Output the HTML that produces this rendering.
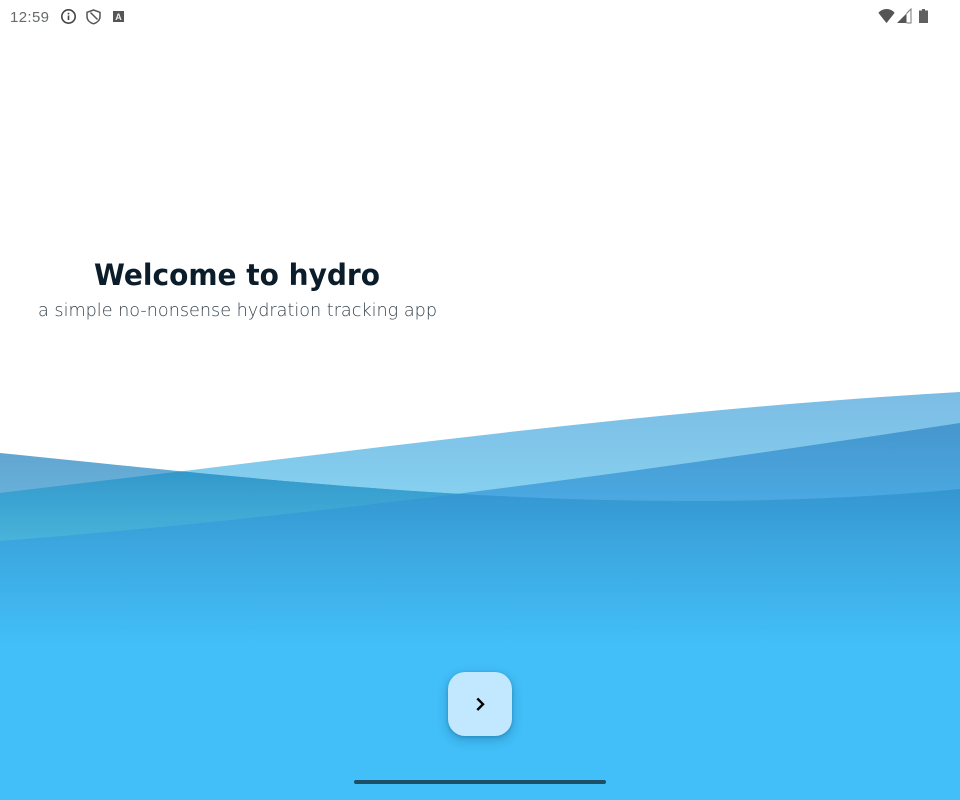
<!DOCTYPE html>
<html lang="en">
<head>
<meta charset="utf-8">
<title>hydro</title>
<style>
html,body{margin:0;padding:0;background:#fff;width:960px;height:800px;overflow:hidden}
svg{position:absolute;left:0;top:0;display:block}
.btn{position:absolute;left:448px;top:672px;width:64px;height:64px;border-radius:17px;background:#c1e8ff;box-shadow:0 4px 10px 2px rgba(0,60,100,.2),0 1px 3px rgba(0,60,100,.28)}
.nav{position:absolute;left:354px;top:780px;width:252px;height:4px;border-radius:2px;background:#1c4f68}
</style>
</head>
<body>
<svg width="960" height="800" viewBox="0 0 960 800">
  <defs>
    <linearGradient id="a" gradientUnits="userSpaceOnUse" x1="0" y1="450" x2="0" y2="645">
      <stop offset="0" stop-color="#2583bd"/><stop offset=".5" stop-color="#36a3dc"/><stop offset="1" stop-color="#3dbdf8"/>
    </linearGradient>
    <linearGradient id="b" gradientUnits="userSpaceOnUse" x1="0" y1="392" x2="0" y2="645">
      <stop offset="0" stop-color="#3d9cd7"/><stop offset=".4" stop-color="#4cb9e8"/><stop offset="1" stop-color="#3dbdf8"/>
    </linearGradient>
    <linearGradient id="c" gradientUnits="userSpaceOnUse" x1="0" y1="423" x2="0" y2="645">
      <stop offset="0" stop-color="#2d84c2"/><stop offset=".4" stop-color="#339ade"/><stop offset="1" stop-color="#3dbdf8"/>
    </linearGradient>
    <linearGradient id="w" gradientUnits="userSpaceOnUse" x1="0" y1="470" x2="0" y2="541">
      <stop offset="0" stop-color="#3298cb"/><stop offset="1" stop-color="#49b3da"/>
    </linearGradient>
    <clipPath id="ca"><path d="M0 453C200 473 450 502 700 501C800 501 900 495 960 489V800H0Z"/></clipPath>
    <clipPath id="cb"><path d="M0 493C320 456 640 410 960 392V800H0Z"/></clipPath>
    <clipPath id="cc"><path d="M0 0H960V423C640 472 320 516 0 541Z"/></clipPath>
  </defs>
  <path d="M0 493C320 456 640 410 960 392V800H0Z" fill="url(#b)" fill-opacity=".68"/>
  <path d="M0 541C320 516 640 472 960 423V800H0Z" fill="url(#c)" fill-opacity=".7"/>
  <path d="M0 453C200 473 450 502 700 501C800 501 900 495 960 489V800H0Z" fill="url(#a)" fill-opacity=".72"/>
  <g clip-path="url(#ca)"><g clip-path="url(#cb)"><g clip-path="url(#cc)">
    <rect x="0" y="460" width="470" height="90" fill="url(#w)"/>
  </g></g></g>

  <text x="94" y="285" textLength="286" lengthAdjust="spacingAndGlyphs" font-family="'DejaVu Sans','Liberation Sans',sans-serif" font-weight="700" font-size="29.500" fill="#0b1c2a">Welcome to hydro</text>
  <text x="38" y="316" textLength="399" lengthAdjust="spacingAndGlyphs" font-family="'DejaVu Sans','Liberation Sans',sans-serif" font-weight="200" font-size="17.500" fill="#37434d">a simple no-nonsense hydration tracking app</text>

  <text x="10" y="22" textLength="39" lengthAdjust="spacing" font-family="'Liberation Sans',sans-serif" font-size="15" fill="#666a6d">12:59</text>

  <!-- info -->
  <circle cx="68.500" cy="16.500" r="6.700" fill="none" stroke="#444" stroke-width="1.600"/>
  <rect x="67.700" y="15.500" width="1.600" height="4.500" fill="#444"/>
  <rect x="67.700" y="12.800" width="1.600" height="1.600" fill="#444"/>
  <!-- shield -->
  <path d="M93.500 10L100 12.300V16.500C100 20 97.300 22.700 93.500 23.800C89.700 22.700 87 20 87 16.500V12.300Z" fill="none" stroke="#555" stroke-width="1.500" stroke-linejoin="round"/>
  <path d="M90.500 12.500L97.500 19.500" stroke="#555" stroke-width="1.500"/>
  <!-- A badge -->
  <rect x="113" y="11" width="11" height="11" fill="#555"/>
  <text x="118.500" y="20" text-anchor="middle" font-family="'Liberation Sans',sans-serif" font-weight="700" font-size="9" fill="#f2f2f2">A</text>
  <!-- wifi -->
  <path d="M879 12.800C883.500 8.400 889.500 8.400 894 12.800L886.500 22.300Z" fill="#555" stroke="#555" stroke-width="1" stroke-linejoin="round"/>
  <!-- signal -->
  <path d="M897 23L906.500 13.500V23Z" fill="#555"/>
  <path d="M906.500 13.500L911 9V23H906.500" fill="none" stroke="#777" stroke-width="1"/>
  <!-- battery -->
  <path d="M922 9H925V10.500H928V23H919V10.500H922Z" fill="#606060"/>
</svg>
<div class="btn"></div>
<div class="nav"></div>
<svg width="960" height="800" viewBox="0 0 960 800" style="pointer-events:none">
  <path d="M477.300 698.500L483 704.200L477.300 710" fill="none" stroke="#000" stroke-width="2.400"/>
</svg>
</body>
</html>
